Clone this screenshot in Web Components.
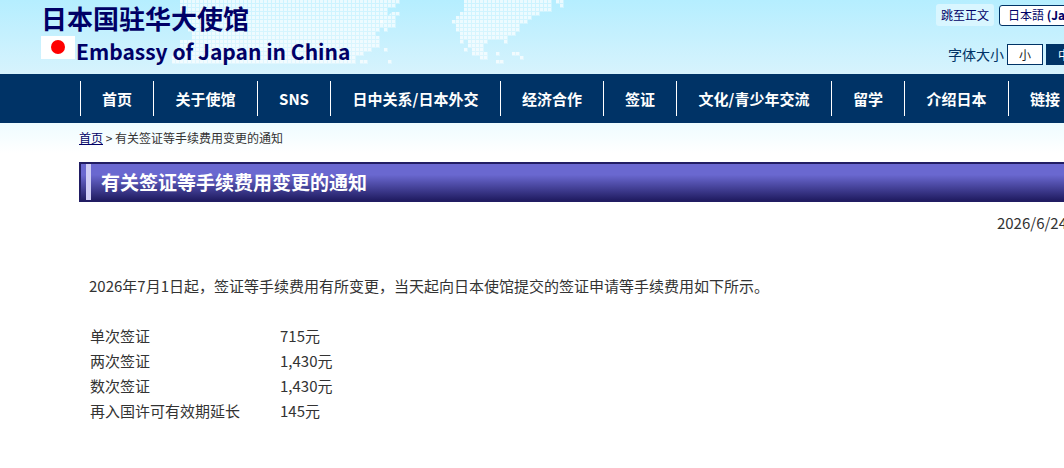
<!DOCTYPE html>
<html lang="zh-CN">
<head>
<meta charset="utf-8">
<title>有关签证等手续费用变更的通知</title>
<style>
body{margin:0;font-family:"Noto Sans CJK SC","Noto Sans CJK JP",sans-serif;font-size:15px;color:#333;background:#fff;overflow-x:hidden}
</style>
</head>
<body>
<embassy-page></embassy-page>
<script>
const define = (name, html) => customElements.define(name, class extends HTMLElement {
  connectedCallback() {
    if (this.shadowRoot) return;
    this.attachShadow({ mode: 'open' }).innerHTML = html;
  }
});

define('world-map', `
<style>:host{display:block;width:440px;height:64px}svg{display:block}</style>
<svg width="440" height="64" aria-hidden="true">
<defs><pattern id="d" width="4" height="4" patternUnits="userSpaceOnUse"><rect width="4" height="4" fill="#fff" fill-opacity=".3"/><rect width="3" height="3" fill="#fff" fill-opacity=".6"/></pattern></defs>
<g fill="url(#d)">
<path d="M48 0H260V8H256V16H252V24H248V32H244V36H248V48H240V52H232V56H224V64H40V56H44V48H48V40H60V32H56V20H52V12H48Z"/>
<path d="M260 0h8v4h-4v4h-4zM260 12h8v4h-4v12h-8v4h-4v-4h-4v-8h4v-4h4zM252 48h4v4h-4zM256 60h4v4h-4zM228 60h8v4h-8z"/>
<path d="M332 0H432V4H424V0H420V12H408V16H400V20H396V24H388V32H384V36H376V40H356V44H352V52H356V60H372V64H364V60H348V56H340V48H336V40H328V32H324V16H328V12H332Z"/>
<path d="M428 4h4v4h-4zM320 20h4v4h-4zM328 40h4v4h-4zM332 48h4v4h-4zM372 40h4v4h-4zM364 52h4v4h-4zM380 52h8v4h-8zM388 56h4v4h-4z"/>
</g></svg>`);

define('site-header', `
<style>
:host{display:flex;position:relative;justify-content:space-between;height:74px;background:linear-gradient(#b5eeff,#d7f3fd);overflow:hidden}
world-map{position:absolute;left:132px;top:0}
.brand{position:relative;padding-left:41px;color:#000066;font-weight:700}
h1{margin:0;font-size:26px;line-height:36px}
.en{display:flex;font-size:21px;line-height:30px;align-items:flex-start}
.flag{display:block;margin-right:1px}
.tools{position:relative;display:flex;flex-direction:column;align-items:flex-end;gap:18px;margin-right:-57px;padding-top:4px;flex:none}
.row{display:flex;align-items:center}
.skip{font-size:12px;line-height:22px;padding:0 5px;border-radius:3px;background:#d9f6ff;color:#000066;text-decoration:none;margin-right:5px}
button{font:12px/18px "Noto Sans CJK SC",sans-serif;box-sizing:border-box;height:21px;border:1px solid #003366;background:#fff;color:#222;padding:0;width:36px;margin-left:3px}
.lang{width:122px;text-align:left;margin:0;padding:0 8px;border-radius:3px;color:#000066;white-space:nowrap}
.size{font-size:14px;line-height:21px;color:#003366}
.on{background:#003366;color:#fff}
</style>
<world-map></world-map>
<div class="brand"><h1>日本国驻华大使馆</h1>
<div class="en"><svg class="flag" width="34" height="23" role="img" aria-label="日本"><rect width="34" height="23" fill="#fff"/><circle cx="17" cy="11" r="7" fill="#f00"/></svg><span>Embassy of Japan in China</span></div></div>
<div class="tools">
<div class="row"><a class="skip" href="#main">跳至正文</a><button class="lang" lang="ja">日本語 <b>(Japanese)</b></button></div>
<div class="row"><span class="size">字体大小</span><button>小</button><button class="on">中</button><button>大</button></div>
</div>`);

define('nav-item', `
<style>
:host{display:block;border-right:1px solid #fff}
a{display:block;text-align:center;white-space:nowrap;font-size:15px;line-height:35px;font-weight:700;color:#fff;text-decoration:none}
</style><a href="#"><slot></slot></a>`);

define('main-nav', `
<style>
:host{display:block;background:#003366;padding:7px 0 7px 80px;overflow:hidden}
nav{display:grid;grid-template-columns:73px 104px 73px 170px 103px 73px 155px 73px 104px 73px;border-left:1px solid #fff}
</style>
<nav><nav-item>首页</nav-item><nav-item>关于使馆</nav-item><nav-item>SNS</nav-item><nav-item>日中关系/日本外交</nav-item><nav-item>经济合作</nav-item><nav-item>签证</nav-item><nav-item>文化/青少年交流</nav-item><nav-item>留学</nav-item><nav-item>介绍日本</nav-item><nav-item>链接</nav-item></nav>`);

define('bread-crumb', `
<style>
:host{display:block;padding:6px 0 15px 79px;font-size:12px;line-height:18px;background:linear-gradient(#eefcff,#fff 30px)}
a{color:#000066}
</style><a href="#">首页</a> &gt; <slot></slot>`);

define('page-title', `
<style>
:host{display:block;box-sizing:border-box;border:2px solid #211d63;border-right:0;background:linear-gradient(#6a68d0,#6a68d0 30%,#211d63);padding-left:5px}
h2{margin:0;border-left:5px solid #cfcdf5;padding-left:10px;font-size:19px;line-height:36px;color:#fff}
</style><h2><slot></slot></h2>`);

define('fee-table', `
<style>
:host{display:block}
table{border-collapse:collapse;font-size:15px;line-height:25px}
th,td{padding:0;text-align:left;font-weight:400}
th{width:190px}
</style>
<table><tbody>
<tr><th scope="row">单次签证</th><td>715元</td></tr>
<tr><th scope="row">两次签证</th><td>1,430元</td></tr>
<tr><th scope="row">数次签证</th><td>1,430元</td></tr>
<tr><th scope="row">再入国许可有效期延长</th><td>145元</td></tr>
</tbody></table>`);

define('embassy-page', `
<style>
:host{display:block;overflow:hidden}
main{padding-left:79px}
.date{margin:8px -3px 0 0;text-align:right;line-height:25px}
.lead{margin:38px 10px 25px;line-height:25px}
fee-table{padding-left:11px}
</style>
<site-header></site-header>
<main-nav></main-nav>
<bread-crumb>有关签证等手续费用变更的通知</bread-crumb>
<main id="main">
<page-title>有关签证等手续费用变更的通知</page-title>
<p class="date">2026/6/24</p>
<p class="lead">2026年7月1日起，签证等手续费用有所变更，当天起向日本使馆提交的签证申请等手续费用如下所示。</p>
<fee-table></fee-table>
</main>`);
</script>
</body>
</html>
